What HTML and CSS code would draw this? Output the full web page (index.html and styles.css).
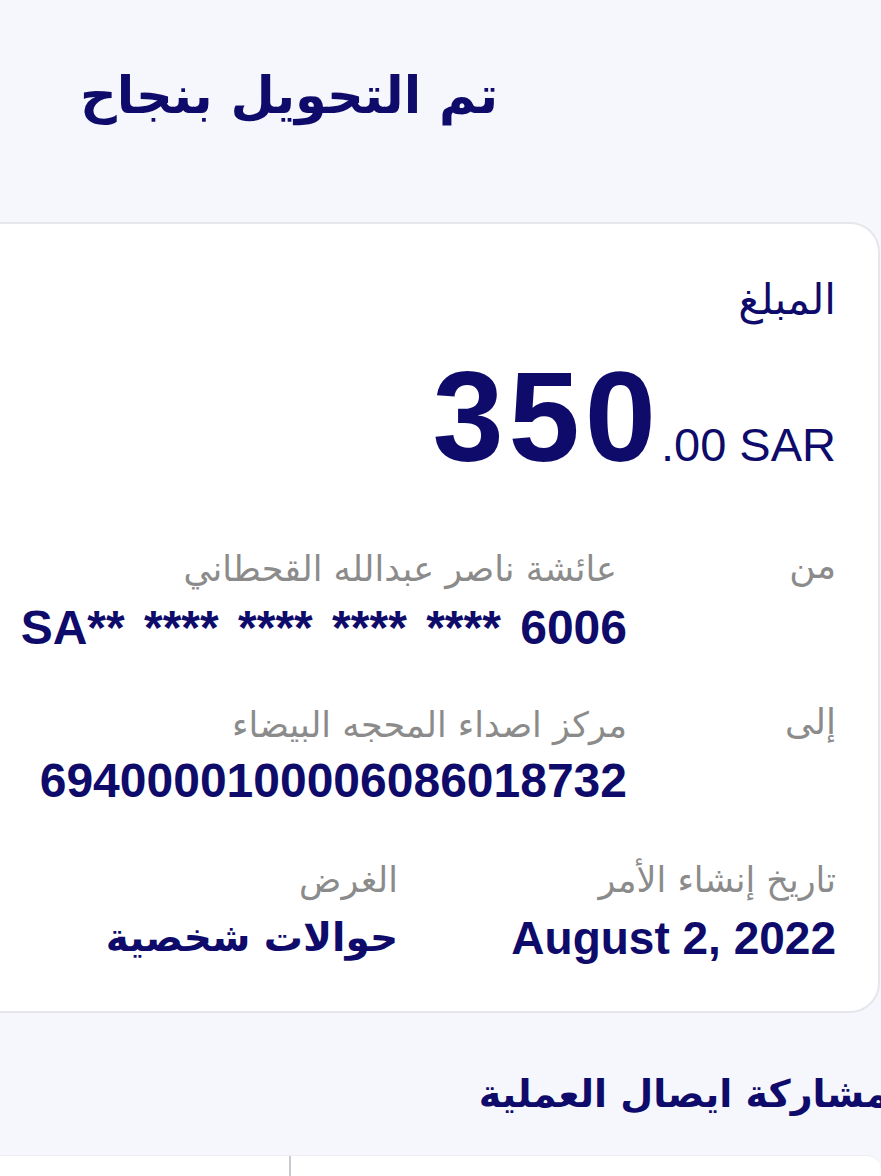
FILE: index.html
```html
<!DOCTYPE html>
<html lang="ar" dir="rtl">
<head>
<meta charset="utf-8">
<title>تم التحويل بنجاح</title>
<link rel="stylesheet" href="styles.css">
</head>
<body>
<div class="screen">
  <header class="topbar">
    <h1 class="title">تم التحويل بنجاح</h1>
  </header>

  <section class="card">
    <div class="amount-label">المبلغ</div>
    <div class="amount" dir="ltr">
      <span class="amt-int">350</span><span class="amt-frac">.00 SAR</span>
    </div>

    <div class="row">
      <div class="row-label">من</div>
      <div class="row-body">
        <div class="name">عائشة ناصر عبدالله القحطاني</div>
        <div class="acct acct-masked" dir="ltr">SA** **** **** **** **** 6006</div>
      </div>
    </div>

    <div class="row row-to">
      <div class="row-label">إلى</div>
      <div class="row-body">
        <div class="name">مركز اصداء المحجه البيضاء</div>
        <div class="acct" dir="ltr">6940000100006086018732</div>
      </div>
    </div>

    <div class="meta">
      <div class="meta-col meta-date">
        <div class="meta-label">تاريخ إنشاء الأمر</div>
        <div class="meta-value meta-latin" dir="ltr">August 2, 2022</div>
      </div>
      <div class="meta-col">
        <div class="meta-label">الغرض</div>
        <div class="meta-value meta-arabic">حوالات شخصية</div>
      </div>
    </div>
  </section>

  <h2 class="share-title">مشاركة ايصال العملية</h2>

  <div class="share-sheet">
    <div class="share-cell share-main"></div>
    <div class="share-cell"></div>
  </div>
</div>
</body>
</html>
```

FILE: styles.css
```css
* { box-sizing: border-box; }

html, body {
  margin: 0;
  padding: 0;
  background: #f6f7fc;
}

body {
  width: 881px;
  height: 1176px;
  overflow: hidden;
  font-family: "Liberation Sans", "DejaVu Sans", sans-serif;
  color: #0e0b6b;
}

.screen {
  width: 881px;
  height: 1176px;
  overflow: hidden;
  display: flex;
  flex-direction: column;
}

.topbar {
  flex: none;
  height: 222px;
  display: flex;
  justify-content: flex-end;
  align-items: flex-start;
  padding: 66px 0 0 80px;
}

.title {
  margin: 0;
  font-family: "DejaVu Sans", sans-serif;
  font-size: 51px;
  font-weight: 700;
  line-height: 60px;
  color: #0e0b6b;
}

.card {
  flex: none;
  margin: 0 1px 0 -40px;
  background: #ffffff;
  border: 2px solid #e6e6ec;
  border-radius: 30px;
  padding: 50px 42px 40px 60px;
}

.amount-label {
  font-family: "DejaVu Sans", sans-serif;
  font-size: 42px;
  line-height: 52px;
  color: #0e0b6b;
}

.amount {
  display: flex;
  justify-content: flex-end;
  align-items: baseline;
  margin-top: 36px;
  line-height: 110px;
}

.amt-int {
  font-size: 128px;
  font-weight: 700;
  letter-spacing: 5px;
}

.amt-frac {
  font-size: 47px;
}

.row {
  display: flex;
  margin-top: 44px;
}

.row-to { margin-top: 42px; }

.row-label {
  width: 209px;
  flex: none;
  font-family: "DejaVu Sans", sans-serif;
  font-size: 36px;
  line-height: 44px;
  color: #8b8b8b;
}

.row-body {
  flex: 1;
  min-width: 0;
  display: flex;
  flex-direction: column;
  align-items: flex-start;
}

.name {
  font-family: "DejaVu Sans", sans-serif;
  font-size: 35px;
  line-height: 50px;
  padding-right: 10px;
  color: #8b8b8b;
  white-space: nowrap;
}

.row-to .name { padding-right: 0; }

.acct {
  font-size: 48px;
  font-weight: 700;
  line-height: 60px;
  padding-top: 4px;
  text-align: right;
  white-space: nowrap;
  color: #0e0b6b;
}

.row-to .acct { padding-top: 1px; }

.acct-masked { word-spacing: 6px; }

.meta {
  display: flex;
  margin-top: 44px;
}

.meta-col {
  display: flex;
  flex-direction: column;
  align-items: flex-start;
}

.meta-date { width: 438px; flex: none; }

.meta-label {
  font-family: "DejaVu Sans", sans-serif;
  font-size: 35px;
  line-height: 50px;
  color: #8b8b8b;
}

.meta-value {
  line-height: 66px;
  font-weight: 700;
  white-space: nowrap;
  color: #0e0b6b;
}

.meta-latin { font-size: 46px; }

.meta-arabic {
  font-family: "DejaVu Sans", sans-serif;
  font-size: 39px;
}

.share-title {
  flex: none;
  margin: 54px -8px 0 0;
  font-family: "DejaVu Sans", sans-serif;
  font-size: 38px;
  font-weight: 700;
  line-height: 54px;
  color: #0e0b6b;
  white-space: nowrap;
}

.share-sheet {
  margin-top: 34px;
  flex: 1;
  min-height: 20px;
  display: flex;
  background: #ffffff;
  border-top: 1px solid #ededf2;
  border-top-right-radius: 14px;
}

.share-main {
  width: 592px;
  flex: none;
  border-left: 2px solid #c9c9cf;
}

.share-cell { height: 100%; }
```
